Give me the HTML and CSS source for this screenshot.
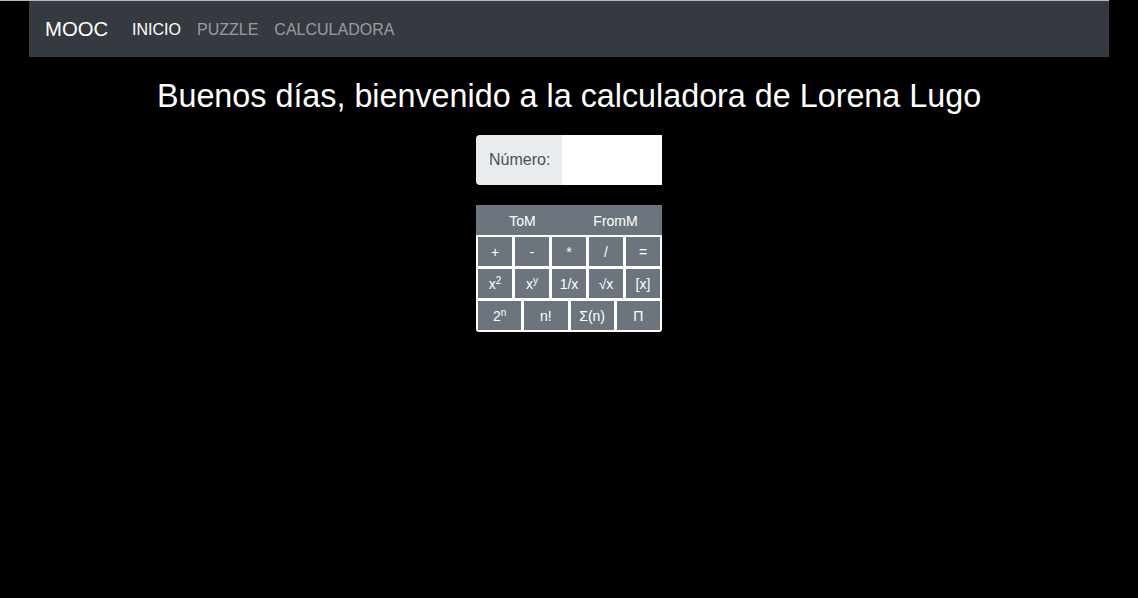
FILE: index.html
```html
<!DOCTYPE html>
<html lang="es">
<head>
<meta charset="utf-8">
<title>MOOC Calculadora</title>
<link rel="stylesheet" href="styles.css">
</head>
<body>
<div class="topline"></div>
<nav class="navbar">
  <a class="brand" href="#">MOOC</a>
  <ul class="nav">
    <li><a class="nav-link active" href="#">INICIO</a></li>
    <li><a class="nav-link" href="#">PUZZLE</a></li>
    <li><a class="nav-link" href="#">CALCULADORA</a></li>
  </ul>
</nav>
<main class="main">
  <h1 class="title">Buenos días, bienvenido a la calculadora de Lorena Lugo</h1>
  <div class="input-group">
    <span class="input-label">Número:</span>
    <input class="input" type="text">
  </div>
  <div class="calc">
    <div class="calc-head">
      <span>ToM</span>
      <span>FromM</span>
    </div>
    <div class="calc-body">
      <div class="row">
        <button class="btn">+</button>
        <button class="btn">-</button>
        <button class="btn">*</button>
        <button class="btn">/</button>
        <button class="btn">=</button>
      </div>
      <div class="row">
        <button class="btn">x<sup>2</sup></button>
        <button class="btn">x<sup>y</sup></button>
        <button class="btn">1/x</button>
        <button class="btn">√x</button>
        <button class="btn">[x]</button>
      </div>
      <div class="row">
        <button class="btn">2<sup>n</sup></button>
        <button class="btn">n!</button>
        <button class="btn">Σ(n)</button>
        <button class="btn">Π</button>
      </div>
    </div>
  </div>
</main>
</body>
</html>
```
FILE: styles.css
```css
html, body {
  margin: 0;
  padding: 0;
  background: #000;
  font-family: "Liberation Sans", Arial, sans-serif;
  color: #fff;
}
.topline {
  height: 1px;
  background: #b9b9b9;
  width: 1109px;
}
.navbar {
  width: 1080px;
  height: 56px;
  margin: 0 auto;
  background: #343a40;
  display: flex;
  align-items: center;
  padding: 1px 16px 0;
  box-sizing: border-box;
}
.brand {
  color: #fff;
  text-decoration: none;
  font-size: 20.3px;
  margin-right: 16px;
}
.nav {
  list-style: none;
  margin: 0;
  padding: 0;
  display: flex;
}
.nav-link {
  display: block;
  padding: 8px;
  font-size: 16px;
  color: rgba(255,255,255,0.5);
  text-decoration: none;
}
.nav-link.active {
  color: #fff;
}
.main {
  display: flex;
  flex-direction: column;
  align-items: center;
}
.title {
  font-weight: normal;
  font-size: 32.3px;
  margin: 20px 0 20px;
  line-height: 38px;
}
.input-group {
  display: flex;
  width: 186px;
  height: 50px;
}
.input-label {
  background: #e9ecef;
  color: #495057;
  font-size: 16px;
  width: 86px;
  box-sizing: border-box;
  padding-left: 13px;
  display: flex;
  align-items: center;
  border-radius: 4px 0 0 4px;
}
.input {
  flex: 1;
  min-width: 0;
  border: none;
  background: #fff;
  margin: 0;
  padding: 0;
  outline: none;
}
.calc {
  margin-top: 20px;
  width: 186px;
  background: #fff;
  border-radius: 0 0 3px 3px;
}
.calc-head {
  height: 30px;
  background: #6c757d;
  display: flex;
}
.calc-head span {
  flex: 1;
  display: flex;
  align-items: center;
  justify-content: center;
  font-size: 14px;
  color: #fff;
  padding-top: 1px;
}
.calc-body {
  padding: 2px;
  display: flex;
  flex-direction: column;
  gap: 3px;
}
.row {
  display: flex;
  gap: 3px;
}
.btn {
  flex: 1;
  min-width: 0;
  height: 29px;
  border: none;
  margin: 0;
  padding: 0;
  background: #6c757d;
  color: #fff;
  font-family: "Liberation Sans", Arial, sans-serif;
  font-size: 14px;
}
.btn sup {
  font-size: 10px;
  line-height: 0;
  vertical-align: 5px;
}
```
